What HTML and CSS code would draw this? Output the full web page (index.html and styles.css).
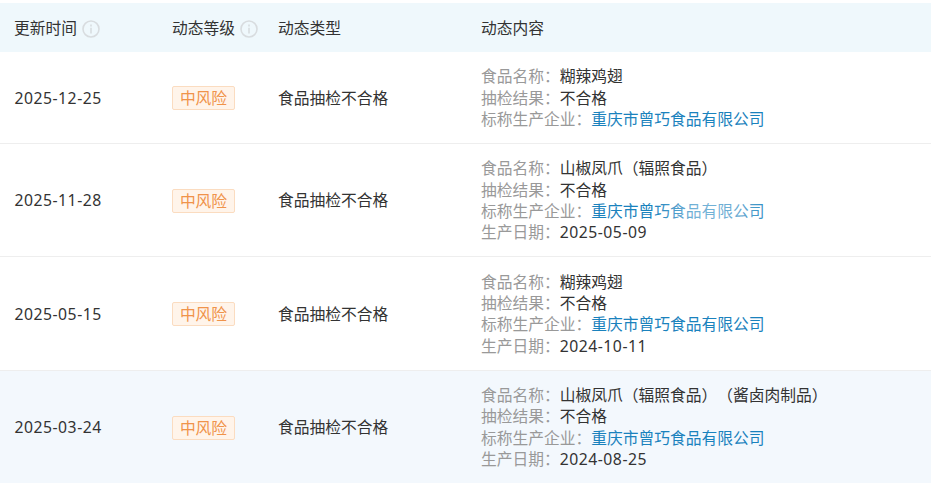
FILE: index.html
```html
<!DOCTYPE html>
<html lang="en">
<head>
  <meta charset="UTF-8" />
  <title>企业动态</title>
  <link rel="stylesheet" href="styles.css">
</head>
<body>
  <table class="news">
    <thead>
      <tr>
        <th class="col-time">更新时间 <svg class="tip" viewBox="0 0 18 18"><circle cx="9" cy="9" r="8"/><path d="M9 4.6v1.8M9 7.8v5.6"/></svg></th>
        <th class="col-level">动态等级 <svg class="tip" viewBox="0 0 18 18"><circle cx="9" cy="9" r="8"/><path d="M9 4.6v1.8M9 7.8v5.6"/></svg></th>
        <th class="col-type">动态类型</th>
        <th>动态内容</th>
      </tr>
    </thead>
    <tbody>
      <tr>
        <td class="date">2025-12-25</td>
        <td><span class="tag">中风险</span></td>
        <td>食品抽检不合格</td>
        <td class="detail">
          <div><span class="label">食品名称：</span>糊辣鸡翅</div>
          <div><span class="label">抽检结果：</span>不合格</div>
          <div><span class="label">标称生产企业：</span><a href="#">重庆市曾巧食品有限公司</a></div>
        </td>
      </tr>
      <tr>
        <td class="date">2025-11-28</td>
        <td><span class="tag">中风险</span></td>
        <td>食品抽检不合格</td>
        <td class="detail">
          <div><span class="label">食品名称：</span>山椒凤爪（辐照食品）</div>
          <div><span class="label">抽检结果：</span>不合格</div>
          <div><span class="label">标称生产企业：</span><a class="washed" href="#">重庆市曾巧食品有限公司</a></div>
          <div><span class="label">生产日期：</span><span class="date">2025-05-09</span></div>
        </td>
      </tr>
      <tr>
        <td class="date">2025-05-15</td>
        <td><span class="tag">中风险</span></td>
        <td>食品抽检不合格</td>
        <td class="detail">
          <div><span class="label">食品名称：</span>糊辣鸡翅</div>
          <div><span class="label">抽检结果：</span>不合格</div>
          <div><span class="label">标称生产企业：</span><a href="#">重庆市曾巧食品有限公司</a></div>
          <div><span class="label">生产日期：</span><span class="date">2024-10-11</span></div>
        </td>
      </tr>
      <tr class="hover">
        <td class="date">2025-03-24</td>
        <td><span class="tag">中风险</span></td>
        <td>食品抽检不合格</td>
        <td class="detail">
          <div><span class="label">食品名称：</span>山椒凤爪（辐照食品）（酱卤肉制品）</div>
          <div><span class="label">抽检结果：</span>不合格</div>
          <div><span class="label">标称生产企业：</span><a href="#">重庆市曾巧食品有限公司</a></div>
          <div><span class="label">生产日期：</span><span class="date">2024-08-25</span></div>
        </td>
      </tr>
    </tbody>
  </table>
</body>
</html>
```

FILE: styles.css
```css
* {
  box-sizing: border-box;
}

html {
  overflow: hidden;
}

body {
  margin: 0;
  padding-top: 3px;
  background: #fff;
  color: #333;
  font-family: "Noto Sans", "Noto Sans CJK SC", sans-serif;
  font-size: 15.75px;
  line-height: 21.4px;
  text-spacing-trim: space-all;
}

.news {
  width: 100%;
  table-layout: fixed;
  border-collapse: collapse;
}

.news th {
  height: 49px;
  padding: 2px 0 0 14px;
  background: #eff8fc;
  font-weight: 400;
  text-align: left;
  white-space: nowrap;
}

.col-time { width: 158px; }
.col-level { width: 106px; }
.col-type { width: 203px; }

.news td {
  padding: 14.2px 0 12.6px 14px;
  border-bottom: 1px solid #eee;
}

.news td.date {
  padding-left: 14.5px;
}

.news tbody tr:last-child td {
  border-bottom: 0;
}

.hover td {
  background: #f3f8fd;
}

.date {
  letter-spacing: 0.5px;
}

.tip {
  width: 18px;
  height: 18px;
  margin-left: 1px;
  vertical-align: -4px;
  fill: none;
  stroke: #d8dcdf;
  stroke-width: 1.6;
}

.tag {
  display: inline-block;
  width: 63px;
  height: 24px;
  border: 1px solid #fbdcc0;
  border-radius: 2px;
  background: #fff4ea;
  color: #f0934a;
  line-height: 22px;
  text-align: center;
}

.label {
  color: #999;
}

.detail a {
  color: #1a82bd;
  text-decoration: none;
}

.washed {
  position: relative;
}

/* faint watermark lying over the link text */
.washed::after {
  content: "";
  position: absolute;
  left: 60px;
  top: -1px;
  right: 0;
  bottom: -1px;
  background: linear-gradient(90deg, rgba(255,255,255,0), rgba(255,255,255,.4) 40%, rgba(255,255,255,.35) 75%, rgba(255,255,255,.1));
}
```
